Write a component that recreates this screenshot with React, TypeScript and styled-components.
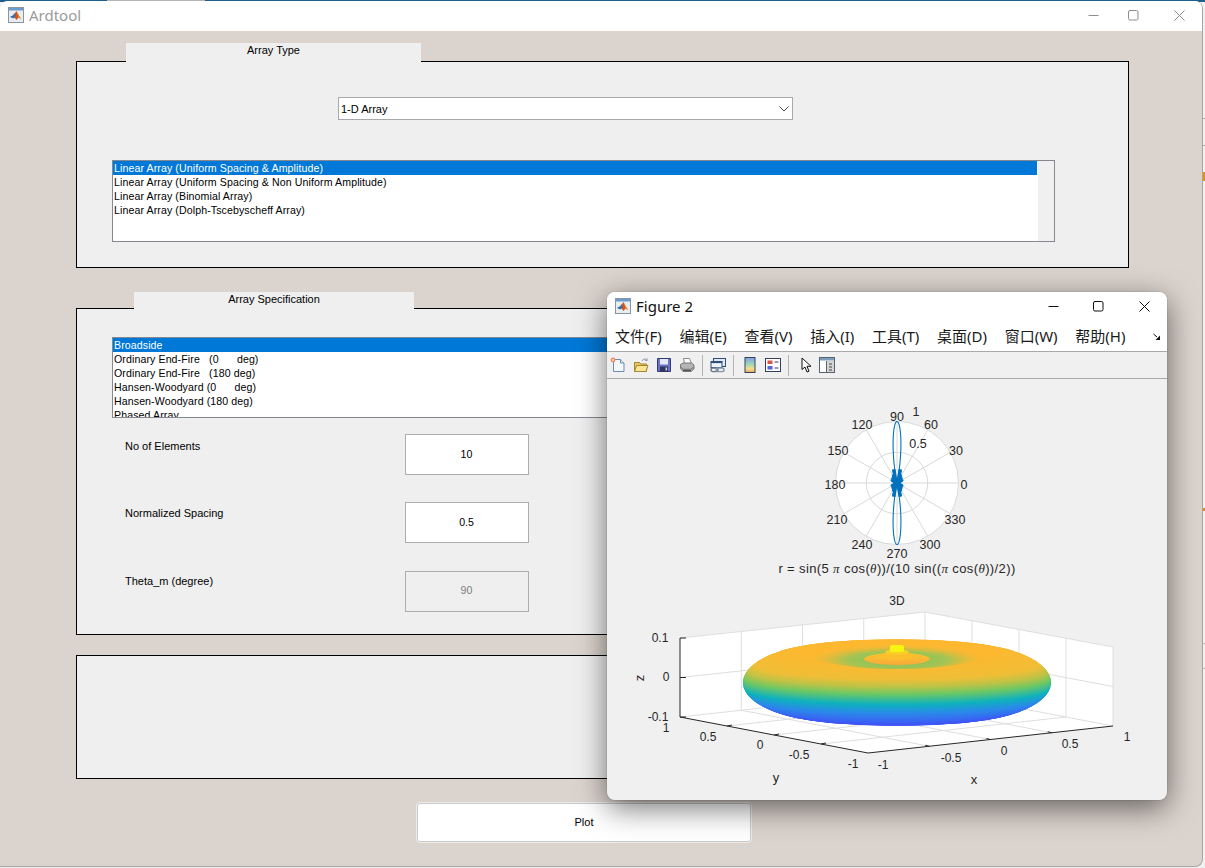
import * as React from 'react'
import styled, { createGlobalStyle } from 'styled-components'

const GlobalStyle = createGlobalStyle`
  html, body {
    margin: 0;
    padding: 0;
    height: 100%;
    overflow: hidden;
    background: #f1f1f1;
  }
  * { box-sizing: border-box; }
`

const uiFont = `'Liberation Sans', Arial, sans-serif`
const titleFont = `'Noto Sans', 'Noto Sans CJK SC', sans-serif`

const Desktop = styled.div`
  position: relative;
  width: 1205px;
  height: 868px;
  overflow: hidden;
  background:
    linear-gradient(to right, #1f5f8b 0 107px, #b4b4b4 107px 205px, #1f5f8b 205px) top / 100% 2px no-repeat,
    #f1f1f1;
`

const DesktopMark = styled.div<{ $top: number; $color: string; $height: number }>`
  position: absolute;
  right: 0;
  top: ${(p) => p.$top}px;
  width: 2px;
  height: ${(p) => p.$height}px;
  background: ${(p) => p.$color};
`

const MainWindow = styled.div`
  position: absolute;
  left: 0;
  top: 1px;
  width: 1203px;
  height: 866px;
  display: flex;
  flex-direction: column;
  background: #dbd3cd;
  border-right: 1px solid #a8a6a4;
  border-bottom: 1px solid #a8a6a4;
  border-radius: 8px 8px 8px 0;
  overflow: hidden;
`

const TitleBar = styled.div<{ $height: number }>`
  flex: none;
  height: ${(p) => p.$height}px;
  display: flex;
  align-items: center;
  background: #fff;
  padding: 0 0 2px 8px;
  position: relative;
`

const TitleText = styled.span<{ $inactive?: boolean }>`
  margin-left: 5px;
  font: 15px ${titleFont};
  color: ${(p) => (p.$inactive ? '#9b9b9b' : '#111')};
`

const WindowButtons = styled.div<{ $gap: number; $closeGap: number; $right: number }>`
  margin-left: auto;
  margin-right: ${(p) => p.$right}px;
  display: flex;
  align-items: center;
  gap: ${(p) => p.$gap}px;

  > :last-child {
    margin-left: ${(p) => p.$closeGap - p.$gap}px;
  }
`

const Content = styled.div`
  flex: 1;
  padding: 30px 73px 0 76px;
  display: flex;
  flex-direction: column;
`

const Panel = styled.section<{ $height: number; $gap: number }>`
  position: relative;
  flex: none;
  height: ${(p) => p.$height}px;
  margin-bottom: ${(p) => p.$gap}px;
  background: #efefef;
  border: 1px solid #000;
`

const PanelTab = styled.div<{ $left: number; $width: number; $height: number }>`
  position: absolute;
  left: ${(p) => p.$left}px;
  top: ${(p) => -p.$height}px;
  width: ${(p) => p.$width}px;
  height: ${(p) => p.$height}px;
  background: #efefef;
  text-align: center;
  font: 11px/14px ${uiFont};
  color: #000;
`

const Dropdown = styled.div`
  width: 455px;
  height: 23px;
  margin: 35px 0 40px 261px;
  padding: 0 3px 0 2px;
  display: flex;
  align-items: center;
  justify-content: space-between;
  background: #fff;
  border: 1px solid #a9a9a9;
  font: 11px ${uiFont};
  color: #000;
`

const ListBox = styled.div<{ $height: number; $top?: number }>`
  position: relative;
  width: 943px;
  height: ${(p) => p.$height}px;
  margin-left: 35px;
  margin-top: ${(p) => p.$top ?? 0}px;
  padding-right: 17px;
  background: #fff;
  border: 1px solid #85898f;
  overflow: hidden;
`

const ScrollTrack = styled.div`
  position: absolute;
  top: 0;
  right: 0;
  bottom: 0;
  width: 16px;
  background: #f0f0f0;
`

const ListRow = styled.div<{ $selected?: boolean }>`
  height: 14px;
  padding-left: 1px;
  font: 10.6px/14px ${uiFont};
  letter-spacing: 0.1px;
  white-space: pre;
  color: ${(p) => (p.$selected ? '#fff' : '#000')};
  background: ${(p) => (p.$selected ? '#0078d7' : 'transparent')};
`

const FieldGrid = styled.div`
  margin: 16px 0 0 48px;
  display: grid;
  grid-template-columns: 280px 124px;
  row-gap: 27.4px;
`

const FieldLabel = styled.div<{ $pad: number }>`
  padding-top: ${(p) => p.$pad}px;
  font: 11px/14px ${uiFont};
  color: #000;
`

const FieldInput = styled.div<{ $disabled?: boolean }>`
  height: 41px;
  display: flex;
  align-items: center;
  justify-content: center;
  padding: 0 1px 2px 0;
  font: 10.6px ${uiFont};
  border: 1px solid #adadad;
  color: ${(p) => (p.$disabled ? '#808080' : '#000')};
  background: ${(p) => (p.$disabled ? '#efefef' : '#fff')};
`

const PlotButton = styled.button`
  width: 334px;
  height: 39px;
  margin-left: 341px;
  padding: 0 0 2px;
  background: #fff;
  border: 1px solid #c9c9c9;
  outline: 1px solid #eeeceb;
  border-radius: 3px;
  font: 11px ${uiFont};
  color: #000;
`

const FigureWindow = styled.div`
  position: absolute;
  left: 607px;
  top: 292px;
  width: 560px;
  height: 508px;
  display: flex;
  flex-direction: column;
  background: #f0f0f0;
  border-radius: 8px;
  overflow: hidden;
`

const FigureShadow = styled.div`
  position: absolute;
  left: 607px;
  top: 292px;
  width: 560px;
  height: 508px;
  border-radius: 8px;
  box-shadow: 0 8px 30px rgba(0, 0, 0, 0.55), 0 0 1px rgba(0, 0, 0, 0.6);
`

const MenuBar = styled.nav`
  flex: none;
  height: 30px;
  display: flex;
  align-items: center;
  gap: 17.7px;
  padding: 0 8px 2px;
  background: #fff;
  border-bottom: 1px solid #a9a9a9;
  position: relative;
`

const MenuItem = styled.span`
  font: 15px ${titleFont};
  color: #1a1a1a;
  white-space: nowrap;
`

const MenuOverflow = styled.svg`
  position: absolute;
  right: 6px;
  top: 11px;
`

const Toolbar = styled.div`
  flex: none;
  height: 27px;
  display: flex;
  align-items: center;
  padding-left: 3px;
  background: #f0f0f0;
  border-bottom: 1px solid #a9a9a9;
`

const ToolIcon = styled.svg<{ $left?: number }>`
  flex: none;
  margin-left: ${(p) => p.$left ?? 7}px;
`

const ToolSep = styled.div`
  flex: none;
  width: 1px;
  height: 21px;
  margin-left: 7px;
  background: #b4b4b4;
`

const PlotArea = styled.svg`
  display: block;
  flex: 1;
`

const PlotLabel = styled.text<{ $size?: number; $spacing?: number }>`
  font-family: ${uiFont};
  font-size: ${(p) => p.$size ?? 12}px;
  letter-spacing: ${(p) => p.$spacing ?? 0}px;
  fill: #262626;
  text-anchor: middle;
  dominant-baseline: central;
`

const MathSym = styled.tspan`
  font-family: 'Liberation Serif', serif;
  font-style: italic;
`

const MatlabIcon = () => (
  <svg width="16" height="16" viewBox="0 0 16 16">
    <rect x="0.5" y="0.5" width="15" height="15" fill="#e8edf2" stroke="#8b959f" />
    <rect x="1" y="1" width="14" height="2.5" fill="#6c9bd0" />
    <path d="M2 10l3-1.5L7 6l1.5-2L10 7l3 5-2.5-1.5L8.5 13 6.5 10.5z" fill="#d8521c" />
    <path d="M2 10l3-1.5L7 6l.6 3L5.5 11.5z" fill="#2c6fb5" />
    <path d="M8.5 4L10 7l3 5-2.5-1.5z" fill="#f08a1d" />
  </svg>
)

const MinimizeIcon = ({ color }: { color: string }) => (
  <svg width="11" height="11" viewBox="0 0 11 11">
    <path d="M0.5 5.5h10" stroke={color} />
  </svg>
)

const MaximizeIcon = ({ color }: { color: string }) => (
  <svg width="11" height="11" viewBox="0 0 11 11">
    <rect x="0.5" y="0.5" width="9.5" height="9.5" rx="1.5" fill="none" stroke={color} />
  </svg>
)

const CloseIcon = ({ color }: { color: string }) => (
  <svg width="11" height="11" viewBox="0 0 11 11">
    <path d="M0.5 0.5l10 10M10.5 0.5l-10 10" stroke={color} />
  </svg>
)

const Chevron = () => (
  <svg width="10" height="6" viewBox="0 0 10 6">
    <path d="M0.5 0.5L5 5l4.5-4.5" fill="none" stroke="#444" />
  </svg>
)

const NewIcon = () => (
  <ToolIcon width="16" height="16" viewBox="0 0 16 16" $left={0}>
    <path d="M3.5 2.5h7l3.5 3.5v8.5H3.5z" fill="#f4f8fd" stroke="#6f8bb0" />
    <path d="M10.5 2.5V6H14" fill="#dfe8f3" stroke="#6f8bb0" />
    <circle cx="3" cy="3" r="2.4" fill="#f4895f" />
    <circle cx="3" cy="3" r="1" fill="#ffe9c0" />
  </ToolIcon>
)

const OpenIcon = () => (
  <ToolIcon width="16" height="16" viewBox="0 0 16 16">
    <path d="M1.5 5.5h5l1 1.5h6v7.5h-12z" fill="#e8c660" stroke="#a5862f" />
    <path d="M1.5 14.5l2-6h11.5l-2 6z" fill="#f8e596" stroke="#a5862f" />
    <path d="M9 4c1-2 3-2.5 4.5-1.5" fill="none" stroke="#8a9bb0" />
    <path d="M14.5 1v3h-3z" fill="#8a9bb0" />
  </ToolIcon>
)

const SaveIcon = () => (
  <ToolIcon width="16" height="16" viewBox="0 0 16 16">
    <path d="M1.5 1.5h13v13h-13z" fill="#6a73c4" stroke="#34397c" />
    <rect x="4" y="2" width="8" height="5.5" fill="#e6e9f5" />
    <rect x="4" y="9.5" width="8" height="5" fill="#30345f" />
    <rect x="9.5" y="10.5" width="1.6" height="3" fill="#c8cbe0" />
  </ToolIcon>
)

const PrintIcon = () => (
  <ToolIcon width="16" height="16" viewBox="0 0 16 16">
    <path d="M4.5 1.5h6l2 5h-7z" fill="#fff" stroke="#8a8a8a" />
    <path d="M1.5 7.5l3-1.5h8l2.5 2v4l-3 2.5h-8l-2.5-3z" fill="#b5b5b5" stroke="#777" />
    <path d="M2 10.5l2.5 1.8h7l3-2" fill="none" stroke="#707070" />
    <path d="M4 13.5h8" stroke="#555" />
  </ToolIcon>
)

const LinkIcon = () => (
  <ToolIcon width="16" height="16" viewBox="0 0 16 16">
    <rect x="3.5" y="1.5" width="12" height="8" fill="#dfe8f3" stroke="#2f4f7a" />
    <rect x="1" y="4.5" width="11" height="6" fill="#eef3f9" stroke="#2f4f7a" />
    <rect x="1" y="4.5" width="11" height="1.6" fill="#2f4f7a" />
    <rect x="1" y="11" width="7" height="3.6" rx="1.8" fill="none" stroke="#69758a" strokeWidth="1.4" />
    <rect x="6" y="11" width="8" height="3.6" rx="1.8" fill="none" stroke="#8793a8" strokeWidth="1.4" />
  </ToolIcon>
)

const ColorbarIcon = () => (
  <ToolIcon width="12" height="16" viewBox="0 0 12 16" $left={10}>
    <defs>
      <linearGradient id="colorbarFill" x1="0" y1="0" x2="0" y2="1">
        <stop offset="0" stopColor="#7f9fe0" />
        <stop offset="0.45" stopColor="#9fd6b8" />
        <stop offset="0.75" stopColor="#f3e08a" />
        <stop offset="1" stopColor="#e9a35e" />
      </linearGradient>
    </defs>
    <rect x="1" y="0.5" width="10" height="15" fill="url(#colorbarFill)" stroke="#33415f" />
  </ToolIcon>
)

const LegendIcon = () => (
  <ToolIcon width="16" height="16" viewBox="0 0 16 16" $left={9}>
    <rect x="0.5" y="1.5" width="15" height="13" fill="#fff" stroke="#33415f" />
    <rect x="2.5" y="3.5" width="5" height="3.5" fill="#d9534f" />
    <rect x="2.5" y="9" width="5" height="3.5" fill="#5566dd" />
    <path d="M9.5 5h4M9.5 11h4" stroke="#33415f" />
  </ToolIcon>
)

const PointerIcon = () => (
  <ToolIcon width="11" height="16" viewBox="0 0 11 16" $left={12}>
    <path d="M1 1v11.5l3-2.5 2 5 2-.8-2-4.9h4z" fill="#fff" stroke="#111" />
  </ToolIcon>
)

const PanelIcon = () => (
  <ToolIcon width="16" height="16" viewBox="0 0 16 16">
    <rect x="0.5" y="0.5" width="15" height="15" fill="#fff" stroke="#59636f" />
    <rect x="1" y="1" width="14" height="2.5" fill="#7d9cc0" />
    <rect x="8" y="4" width="7" height="11" fill="#d4d4d4" />
    <path d="M7.5 4v11" stroke="#59636f" />
    <path d="M10 7h3M10 10h3M10 13h3" stroke="#444" />
  </ToolIcon>
)

// array factor of the plotted 10 element broadside array
const arrayFactor = (theta: number) => {
  const psi = Math.PI * Math.cos(theta)
  const denom = 10 * Math.sin(psi / 2)
  if (Math.abs(denom) < 1e-6) return 1
  return Math.abs(Math.sin(5 * psi) / denom)
}

const CX = 897
const CY = 483
const R = 61.5

const polarPath = () => {
  const pts: string[] = []
  for (let i = 0; i <= 1440; i++) {
    const t = (i / 1440) * 2 * Math.PI
    const r = arrayFactor(t) * R
    pts.push(`${(CX + r * Math.cos(t)).toFixed(2)} ${(CY - r * Math.sin(t)).toFixed(2)}`)
  }
  return 'M' + pts.join('L')
}

const polarLabels: [string, number, number][] = [
  ['90', 897, 417], ['1', 916, 412], ['60', 931, 425], ['0.5', 918, 444],
  ['30', 956, 451], ['0', 964, 485], ['330', 955, 520], ['300', 930, 545],
  ['270', 897, 554], ['240', 862, 545], ['210', 837, 520], ['180', 835, 485],
  ['150', 838, 451], ['120', 862, 425],
]

const PolarPlot = () => (
  <g>
    <defs>
      <clipPath id="starClip">
        <circle cx={CX} cy={CY} r="14" />
      </clipPath>
    </defs>
    <circle cx={CX} cy={CY} r={R} fill="#fff" stroke="#d9d9d9" />
    <circle cx={CX} cy={CY} r={R / 2} fill="none" stroke="#d9d9d9" />
    {[0, 30, 60, 90, 120, 150].map((a) => {
      const c = Math.cos((a * Math.PI) / 180) * R
      const s = Math.sin((a * Math.PI) / 180) * R
      return <line key={a} x1={CX - c} y1={CY + s} x2={CX + c} y2={CY - s} stroke="#d9d9d9" />
    })}
    <path d={polarPath()} fill="none" stroke="#0072bd" strokeWidth="1.1" />
    <path d={polarPath()} fill="none" stroke="#0072bd" strokeWidth="1.7" clipPath="url(#starClip)" />
    <circle cx={CX} cy={CY} r="3" fill="#0072bd" />
    {polarLabels.map(([t, x, y]) => (
      <PlotLabel key={t} x={x} y={y} $size={12.5}>{t}</PlotLabel>
    ))}
    <PlotLabel x={897} y={568} $size={13} $spacing={0.38}>
      r = sin(5 <MathSym>π</MathSym> cos(<MathSym>θ</MathSym>))/(10 sin((<MathSym>π</MathSym> cos(<MathSym>θ</MathSym>))/2))
    </PlotLabel>
  </g>
)

const parulaStops: [number, [number, number, number]][] = [
  [0, [62, 80, 248]],
  [0.075, [62, 90, 245]],
  [0.25, [45, 135, 235]],
  [0.4, [15, 178, 190]],
  [0.55, [110, 200, 100]],
  [0.65, [190, 195, 70]],
  [0.75, [240, 190, 55]],
  [1, [254, 184, 48]],
]

const parula = (t: number) => {
  for (let i = 1; i < parulaStops.length; i++) {
    const [t1, c1] = parulaStops[i]
    const [t0, c0] = parulaStops[i - 1]
    if (t <= t1) {
      const k = (t - t0) / (t1 - t0)
      const mix = c0.map((v, n) => Math.round(v + (c1[n] - v) * k))
      return `rgb(${mix.join(',')})`
    }
  }
  return 'rgb(254,184,48)'
}

// torus drawn as stacked ellipse slices, bottom one first
const torusSlices = () => {
  const out: { key: number; cy: number; rx: number; ry: number; fill: string }[] = []
  const n = 120
  for (let i = 0; i <= n; i++) {
    const z = -1 + (2 * i) / n
    const rx = 72 + 82 * Math.pow(1 - Math.pow(Math.abs(z), 2), 0.5)
    out.push({
      key: i,
      cy: 682.5 - z * 35,
      rx,
      ry: rx * 0.1,
      fill: parula((z + 1) / 2),
    })
  }
  return out
}

const yTicks: [string, number, number][] = [
  ['1', 666, 728], ['0.5', 708, 737], ['0', 760, 745], ['-0.5', 799, 755], ['-1', 853, 764],
]
const xTicks: [string, number, number][] = [
  ['-1', 883, 765], ['-0.5', 951, 758], ['0', 1004, 751], ['0.5', 1070, 744], ['1', 1127, 737],
]

const lerp = (a: number, b: number, t: number) => a + (b - a) * t
const GRID = '#dedede'

const Surface3D = () => (
  <g>
    <path d="M680 638L925 612V690L680 717z" fill="#fff" />
    <path d="M925 612L1113 647V726L925 690z" fill="#fff" />
    <path d="M680 717L925 690L1113 726L868 753z" fill="#fff" />
    <path d="M680 638L925 612L1113 647" fill="none" stroke={GRID} />
    <path d="M925 612V690M1113 647V726" stroke={GRID} />
    <path d="M680 677.5L925 651L1113 686.5" fill="none" stroke={GRID} />
    {[0.25, 0.5, 0.75].map((t) => (
      <g key={t}>
        <line x1={lerp(680, 925, t)} y1={lerp(638, 612, t)} x2={lerp(680, 925, t)} y2={lerp(717, 690, t)} stroke={GRID} />
        <line x1={lerp(925, 1113, t)} y1={lerp(612, 647, t)} x2={lerp(925, 1113, t)} y2={lerp(690, 726, t)} stroke={GRID} />
        <line x1={lerp(680, 868, t)} y1={lerp(717, 753, t)} x2={lerp(925, 1113, t)} y2={lerp(690, 726, t)} stroke={GRID} />
        <line x1={lerp(868, 1113, t)} y1={lerp(753, 726, t)} x2={lerp(680, 925, t)} y2={lerp(717, 690, t)} stroke={GRID} />
      </g>
    ))}
    <path d="M680 717L925 690L1113 726" fill="none" stroke={GRID} />

    <path d="M680 638V717L868 753L1113 726" fill="none" stroke="#262626" />
    <path d="M680 638h6M680 677.5h6M680 717h6" stroke="#262626" />
    {[0.25, 0.5, 0.75].map((t) => (
      <g key={t}>
        <line x1={lerp(680, 868, t)} y1={lerp(717, 753, t)} x2={lerp(680, 868, t) + 5} y2={lerp(717, 753, t) - 1} stroke="#262626" />
        <line x1={lerp(868, 1113, t)} y1={lerp(753, 726, t)} x2={lerp(868, 1113, t) - 4} y2={lerp(753, 726, t) - 1} stroke="#262626" />
      </g>
    ))}

    <defs>
      <radialGradient id="dipFill">
        <stop offset="0" stopColor="#7fc25e" />
        <stop offset="0.55" stopColor="#a3c453" />
        <stop offset="1" stopColor="#fdb72f" stopOpacity="0" />
      </radialGradient>
      <clipPath id="dipClip">
        <path d="M800 640H994V655C960 667 925 669 897 669C869 669 834 667 800 655z" />
      </clipPath>
      <linearGradient id="lobeFill" x1="0" y1="0" x2="0" y2="1">
        <stop offset="0" stopColor="#fdc52c" />
        <stop offset="1" stopColor="#f9a93a" />
      </linearGradient>
    </defs>
    {torusSlices().map((s) => (
      <ellipse key={s.key} cx={897} cy={s.cy} rx={s.rx} ry={s.ry} fill={s.fill} />
    ))}
    <ellipse cx={897} cy={660} rx={92} ry={16} fill="url(#dipFill)" clipPath="url(#dipClip)" />
    <ellipse cx={897} cy={659} rx={33} ry={6} fill="url(#lobeFill)" />
    <ellipse cx={897} cy={656} rx={19} ry={4} fill="#fbbf2c" />
    <ellipse cx={897} cy={652} rx={12} ry={2.5} fill="#fad024" />
    <rect x={890} y={645} width={14} height={7} rx={2} fill="#f7f50f" />

    <PlotLabel x={897} y={601}>3D</PlotLabel>
    <PlotLabel x={660} y={638}>0.1</PlotLabel>
    <PlotLabel x={666} y={677}>0</PlotLabel>
    <PlotLabel x={658} y={717}>-0.1</PlotLabel>
    {yTicks.map(([t, x, y]) => <PlotLabel key={t} x={x} y={y}>{t}</PlotLabel>)}
    {xTicks.map(([t, x, y]) => <PlotLabel key={t} x={x} y={y}>{t}</PlotLabel>)}
    <PlotLabel x={639} y={678} transform="rotate(-90 639 678)" $size={13}>z</PlotLabel>
    <PlotLabel x={776} y={777} $size={13}>y</PlotLabel>
    <PlotLabel x={974} y={779} $size={13}>x</PlotLabel>
  </g>
)

const arrayTypes = [
  'Linear Array (Uniform Spacing & Amplitude)',
  'Linear Array (Uniform Spacing & Non Uniform Amplitude)',
  'Linear Array (Binomial Array)',
  'Linear Array (Dolph-Tscebyscheff Array)',
]

const specs = [
  'Broadside',
  'Ordinary End-Fire   (0      deg)',
  'Ordinary End-Fire   (180 deg)',
  'Hansen-Woodyard (0      deg)',
  'Hansen-Woodyard (180 deg)',
  'Phased Array',
]

const menus = ['文件(F)', '编辑(E)', '查看(V)', '插入(I)', '工具(T)', '桌面(D)', '窗口(W)', '帮助(H)']

export default function App() {
  return (
    <Desktop>
      <GlobalStyle />
      <DesktopMark $top={172} $height={9} $color="#e8920c" />
      <DesktopMark $top={508} $height={3} $color="#e8820c" />
      <DesktopMark $top={118} $height={1} $color="#aaa" />
      <DesktopMark $top={145} $height={1} $color="#aaa" />
      <DesktopMark $top={643} $height={1} $color="#bbb" />
      <DesktopMark $top={668} $height={1} $color="#bbb" />

      <MainWindow>
        <TitleBar $height={30}>
          <MatlabIcon />
          <TitleText $inactive>Ardtool</TitleText>
          <WindowButtons $gap={29} $closeGap={35} $right={17}>
            <MinimizeIcon color="#8d8d8d" />
            <MaximizeIcon color="#8d8d8d" />
            <CloseIcon color="#8d8d8d" />
          </WindowButtons>
        </TitleBar>
        <Content>
          <Panel $height={207} $gap={40}>
            <PanelTab $left={49} $width={295} $height={19}>Array Type</PanelTab>
            <Dropdown>
              1-D Array
              <Chevron />
            </Dropdown>
            <ListBox $height={82}>
              {arrayTypes.map((t, i) => (
                <ListRow key={t} $selected={i === 0}>{t}</ListRow>
              ))}
              <ScrollTrack />
            </ListBox>
          </Panel>

          <Panel $height={327} $gap={20}>
            <PanelTab $left={57} $width={280} $height={17}>Array Specification</PanelTab>
            <ListBox $height={81} $top={28}>
              {specs.map((t, i) => (
                <ListRow key={t} $selected={i === 0}>{t}</ListRow>
              ))}
            </ListBox>
            <FieldGrid>
              <FieldLabel $pad={5}>No of Elements</FieldLabel>
              <FieldInput>10</FieldInput>
              <FieldLabel $pad={4}>Normalized Spacing</FieldLabel>
              <FieldInput>0.5</FieldInput>
              <FieldLabel $pad={3}>Theta_m (degree)</FieldLabel>
              <FieldInput $disabled>90</FieldInput>
            </FieldGrid>
          </Panel>

          <Panel $height={124} $gap={24} />

          <PlotButton>Plot</PlotButton>
        </Content>
      </MainWindow>

      <FigureShadow />
      <FigureWindow>
        <TitleBar $height={30}>
          <MatlabIcon />
          <TitleText>Figure 2</TitleText>
          <WindowButtons $gap={34} $closeGap={35} $right={17}>
            <MinimizeIcon color="#111" />
            <MaximizeIcon color="#111" />
            <CloseIcon color="#111" />
          </WindowButtons>
        </TitleBar>
        <MenuBar>
          {menus.map((m) => (
            <MenuItem key={m}>{m}</MenuItem>
          ))}
          <MenuOverflow width="8" height="8" viewBox="0 0 8 8">
            <path d="M0.5 1L4 4" stroke="#111" />
            <path d="M7 2.5V7H2.5z" fill="#111" />
          </MenuOverflow>
        </MenuBar>
        <Toolbar>
          <NewIcon />
          <OpenIcon />
          <SaveIcon />
          <PrintIcon />
          <ToolSep />
          <LinkIcon />
          <ToolSep />
          <ColorbarIcon />
          <LegendIcon />
          <ToolSep />
          <PointerIcon />
          <PanelIcon />
        </Toolbar>
        <PlotArea viewBox="607 379 560 421">
          <PolarPlot />
          <Surface3D />
        </PlotArea>
      </FigureWindow>
    </Desktop>
  )
}
